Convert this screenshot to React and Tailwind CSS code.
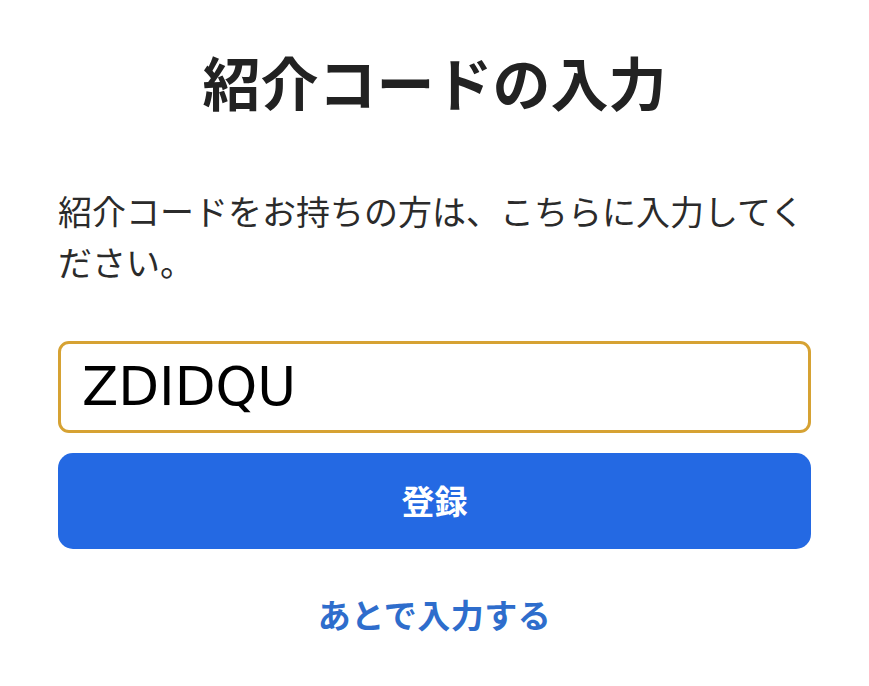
export default function App() {
  const jp = { fontFamily: '"Noto Sans CJK JP", "Noto Sans", sans-serif' };
  return (
    <div className="w-[869px] h-[686px] bg-white px-[58px] pt-[39px]" style={jp}>
      <h1 className="text-center text-[58px] leading-[85px] font-bold text-[#222222]">紹介コードの入力</h1>
      <p className="mt-[61px] text-[34px] leading-[51px] text-[#2b2b2b]">
        紹介コードをお持ちの方は、こちらに入力してください。
      </p>
      <div className="mt-[54px] h-[92px] rounded-[11px] border-[3px] border-[#d6a233] bg-white flex items-center pl-[21px] pb-[2px]">
        <span className="text-[53px] text-black leading-none" style={{ fontFamily: '"DejaVu Sans", sans-serif' }}>ZDIDQU</span>
      </div>
      <button className="mt-[20px] w-full h-[96px] rounded-[15px] bg-[#2469e3] text-white text-[33px] font-bold flex items-center justify-center">
        登録
      </button>
      <div className="mt-[41px] text-center text-[33px] leading-[48px] font-bold text-[#2e6dcc] tracking-[0.5px]">あとで入力する</div>
    </div>
  );
}
